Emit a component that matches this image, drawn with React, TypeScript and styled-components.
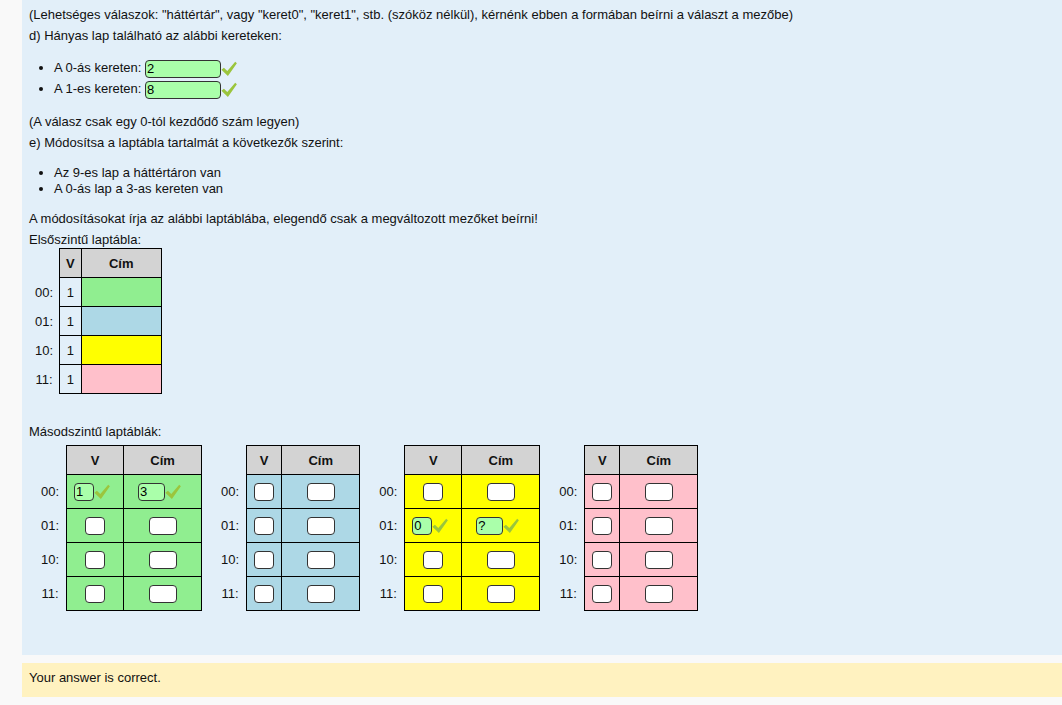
import React from "react";
import styled, { createGlobalStyle } from "styled-components";

const GlobalStyle = createGlobalStyle`
  html, body { margin: 0; padding: 0; background: #f9f9f9; }
  body {
    font-family: "Liberation Sans", Arial, sans-serif;
    font-size: 13px;
    color: #111;
  }
`;

const Page = styled.div`
  padding-left: 22px;
`;

const Formulation = styled.div`
  background: #e2eff9;
  padding: 7px 7px 44px;
`;

const P = styled.p<{ $mb?: number }>`
  margin: 0 0 ${(p) => (p.$mb ?? 5)}px;
  line-height: 16px;
`;

const List = styled.ul<{ $tall?: boolean }>`
  margin: ${(p) => (p.$tall ? "13px 0 15px" : "14px 0")};
  padding-left: 25px;
  line-height: ${(p) => (p.$tall ? "21px" : "16px")};
`;

const Field = styled.input<{ $w: number; $ok?: boolean }>`
  box-sizing: border-box;
  width: ${(p) => p.$w}px;
  height: 18px;
  margin: 0;
  padding: 0 1px;
  border: 1px solid #333;
  border-radius: 4px;
  background: ${(p) => (p.$ok ? "#aaffaa" : "#fff")};
  font-family: "Liberation Sans", Arial, sans-serif;
  font-size: 13px;
  color: #000;
  vertical-align: middle;
  outline: none;
`;

const CheckSvg = styled.svg<{ $pad?: number }>`
  width: 16px;
  height: 16px;
  vertical-align: middle;
  margin-right: ${(p) => p.$pad ?? 0}px;
`;

const Check = ({ pad }: { pad?: number }) => (
  <CheckSvg $pad={pad} viewBox="0 0 16 16">
    <path d="M0.4 8.8 L2.9 6.8 L6.3 10.1 L14.2 0.8 L15.9 2.3 L6.9 15.1 Z" fill="#9bc53d" />
  </CheckSvg>
);

const Table = styled.table<{ $mb?: number }>`
  border-collapse: collapse;
  margin-bottom: ${(p) => p.$mb ?? 0}px;
`;

const Label = styled.td<{ $pl: number; $pr: number }>`
  padding: 0 ${(p) => p.$pr}px 0 ${(p) => p.$pl}px;
  text-align: center;
  white-space: nowrap;
`;

const Head = styled.th<{ $h: number; $w?: number }>`
  border: 1px solid #000;
  background: #d3d3d3;
  font-weight: bold;
  height: ${(p) => p.$h}px;
  padding: 0 6px;
  ${(p) => (p.$w ? `width: ${p.$w}px;` : "")}
  box-sizing: border-box;
`;

const Cell = styled.td<{ $bg?: string; $h: number; $px: number }>`
  border: 1px solid #000;
  background: ${(p) => p.$bg ?? "transparent"};
  height: ${(p) => p.$h}px;
  padding: 0 ${(p) => p.$px}px;
  text-align: center;
  white-space: nowrap;
  box-sizing: border-box;
`;

const SubRow = styled.div`
  display: flex;
  gap: 7px;
  margin-top: 5px;
`;

const Outcome = styled.div`
  margin-top: 8px;
  background: #fff2c0;
  padding: 7px 7px 11px;
  line-height: 16px;
`;

const colors = ["#90ee90", "#add8e6", "#ffff00", "#ffc0cb"];
const rows = ["00", "01", "10", "11"];

type Filled = { [k: string]: { v: string; c: string } };
const filled: Filled = {
  "0-0": { v: "1", c: "3" },
  "2-1": { v: "0", c: "?" },
};

const SubTable = ({ t }: { t: number }) => (
  <Table>
    <thead>
      <tr>
        <Label $pl={12} $pr={7} />
        <Head $h={29}>V</Head>
        <Head $h={29} $w={78}>Cím</Head>
      </tr>
    </thead>
    <tbody>
      {rows.map((r, i) => {
        const f = filled[`${t}-${i}`];
        return (
          <tr key={r}>
            <Label $pl={12} $pr={7}>{r}:</Label>
            <Cell $bg={colors[t]} $h={34} $px={7}>
              {f ? (
                <>
                  <Field $w={20} $ok readOnly defaultValue={f.v} />
                  <Check pad={6} />
                </>
              ) : (
                <Field $w={20} readOnly defaultValue="" />
              )}
            </Cell>
            <Cell $bg={colors[t]} $h={34} $px={0}>
              {f ? (
                <>
                  <Field $w={27} $ok readOnly defaultValue={f.c} />
                  <Check pad={6} />
                </>
              ) : (
                <Field $w={28} readOnly defaultValue="" />
              )}
            </Cell>
          </tr>
        );
      })}
    </tbody>
  </Table>
);

export default function App() {
  return (
    <Page>
      <GlobalStyle />
      <Formulation>
        <P>
          (Lehetséges válaszok: "háttértár", vagy "keret0", "keret1", stb. (szóköz nélkül), kérnénk ebben a
          formában beírni a választ a mezőbe)
        </P>
        <P>d) Hányas lap található az alábbi kereteken:</P>
        <List $tall>
          <li>
            A 0-ás kereten: <Field $w={76} $ok readOnly defaultValue="2" />
            <Check />
          </li>
          <li>
            A 1-es kereten: <Field $w={76} $ok readOnly defaultValue="8" />
            <Check />
          </li>
        </List>
        <P>(A válasz csak egy 0-tól kezdődő szám legyen)</P>
        <P>e) Módosítsa a laptábla tartalmát a következők szerint:</P>
        <List>
          <li>Az 9-es lap a háttértáron van</li>
          <li>A 0-ás lap a 3-as kereten van</li>
        </List>
        <P>A módosításokat írja az alábbi laptáblába, elegendő csak a megváltozott mezőket beírni!</P>
        <P $mb={0}>Elsőszintű laptábla:</P>
        <Table $mb={30}>
          <thead>
            <tr>
              <Label $pl={6} $pr={6} />
              <Head $h={29}>V</Head>
              <Head $h={29} $w={80}>Cím</Head>
            </tr>
          </thead>
          <tbody>
            {rows.map((r, i) => (
              <tr key={r}>
                <Label $pl={6} $pr={6}>{r}:</Label>
                <Cell $h={29} $px={6}>1</Cell>
                <Cell $bg={colors[i]} $h={29} $px={0} />
              </tr>
            ))}
          </tbody>
        </Table>
        <P $mb={0}>Másodszintű laptáblák:</P>
        <SubRow>
          {[0, 1, 2, 3].map((t) => (
            <SubTable key={t} t={t} />
          ))}
        </SubRow>
      </Formulation>
      <Outcome>Your answer is correct.</Outcome>
    </Page>
  );
}
